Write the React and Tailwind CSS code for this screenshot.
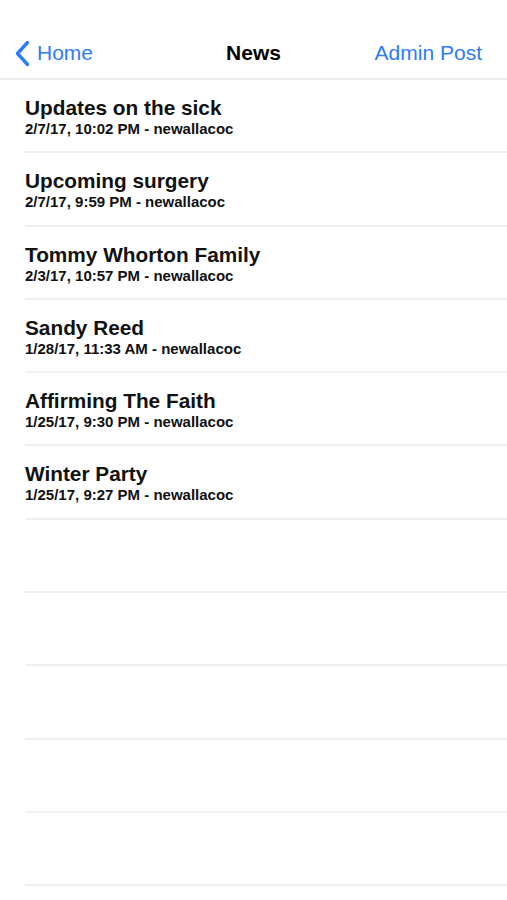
import React from "react";

const items = [
  ["Updates on the sick", "2/7/17, 10:02 PM - newallacoc"],
  ["Upcoming surgery", "2/7/17, 9:59 PM - newallacoc"],
  ["Tommy Whorton Family", "2/3/17, 10:57 PM - newallacoc"],
  ["Sandy Reed", "1/28/17, 11:33 AM - newallacoc"],
  ["Affirming The Faith", "1/25/17, 9:30 PM - newallacoc"],
  ["Winter Party", "1/25/17, 9:27 PM - newallacoc"],
  null, null, null, null, null,
];

export default function App() {
  return (
    <div className="w-[507px] h-[900px] bg-white overflow-hidden" style={{ fontFamily: '"Liberation Sans", Arial, sans-serif' }}>
      <div className="h-[80px] border-b-2 border-[#ececec] pt-[29px]">
        <div className="relative h-[48px] flex items-center justify-between">
          <div className="flex items-center pl-[14px] text-[#2e7cf6] text-[21px]">
            <svg width="18" height="27" viewBox="0 0 18 27" className="mr-[5px]">
              <path d="M13.5 2.5 L3.5 13.5 L13.5 24.5" fill="none" stroke="#2e7cf6" strokeWidth="3.4" strokeLinecap="round" strokeLinejoin="round" />
            </svg>
            <span>Home</span>
          </div>
          <div className="absolute left-0 right-0 text-center text-[21px] font-bold text-black pointer-events-none">News</div>
          <div className="pr-[25px] text-[#2e7cf6] text-[21px]">Admin Post</div>
        </div>
      </div>
      <div className="pl-[25px]">
        {items.map((it, i) => (
          <div key={i} className="h-[73.3px] border-b-2 border-[#efefef] pt-[16px]">
            {it && (
              <>
                <div className="text-[20.8px] leading-[24px] font-bold text-[#111]">{it[0]}</div>
                <div className="text-[15px] leading-[17px] font-bold text-[#111]">{it[1]}</div>
              </>
            )}
          </div>
        ))}
      </div>
    </div>
  );
}
